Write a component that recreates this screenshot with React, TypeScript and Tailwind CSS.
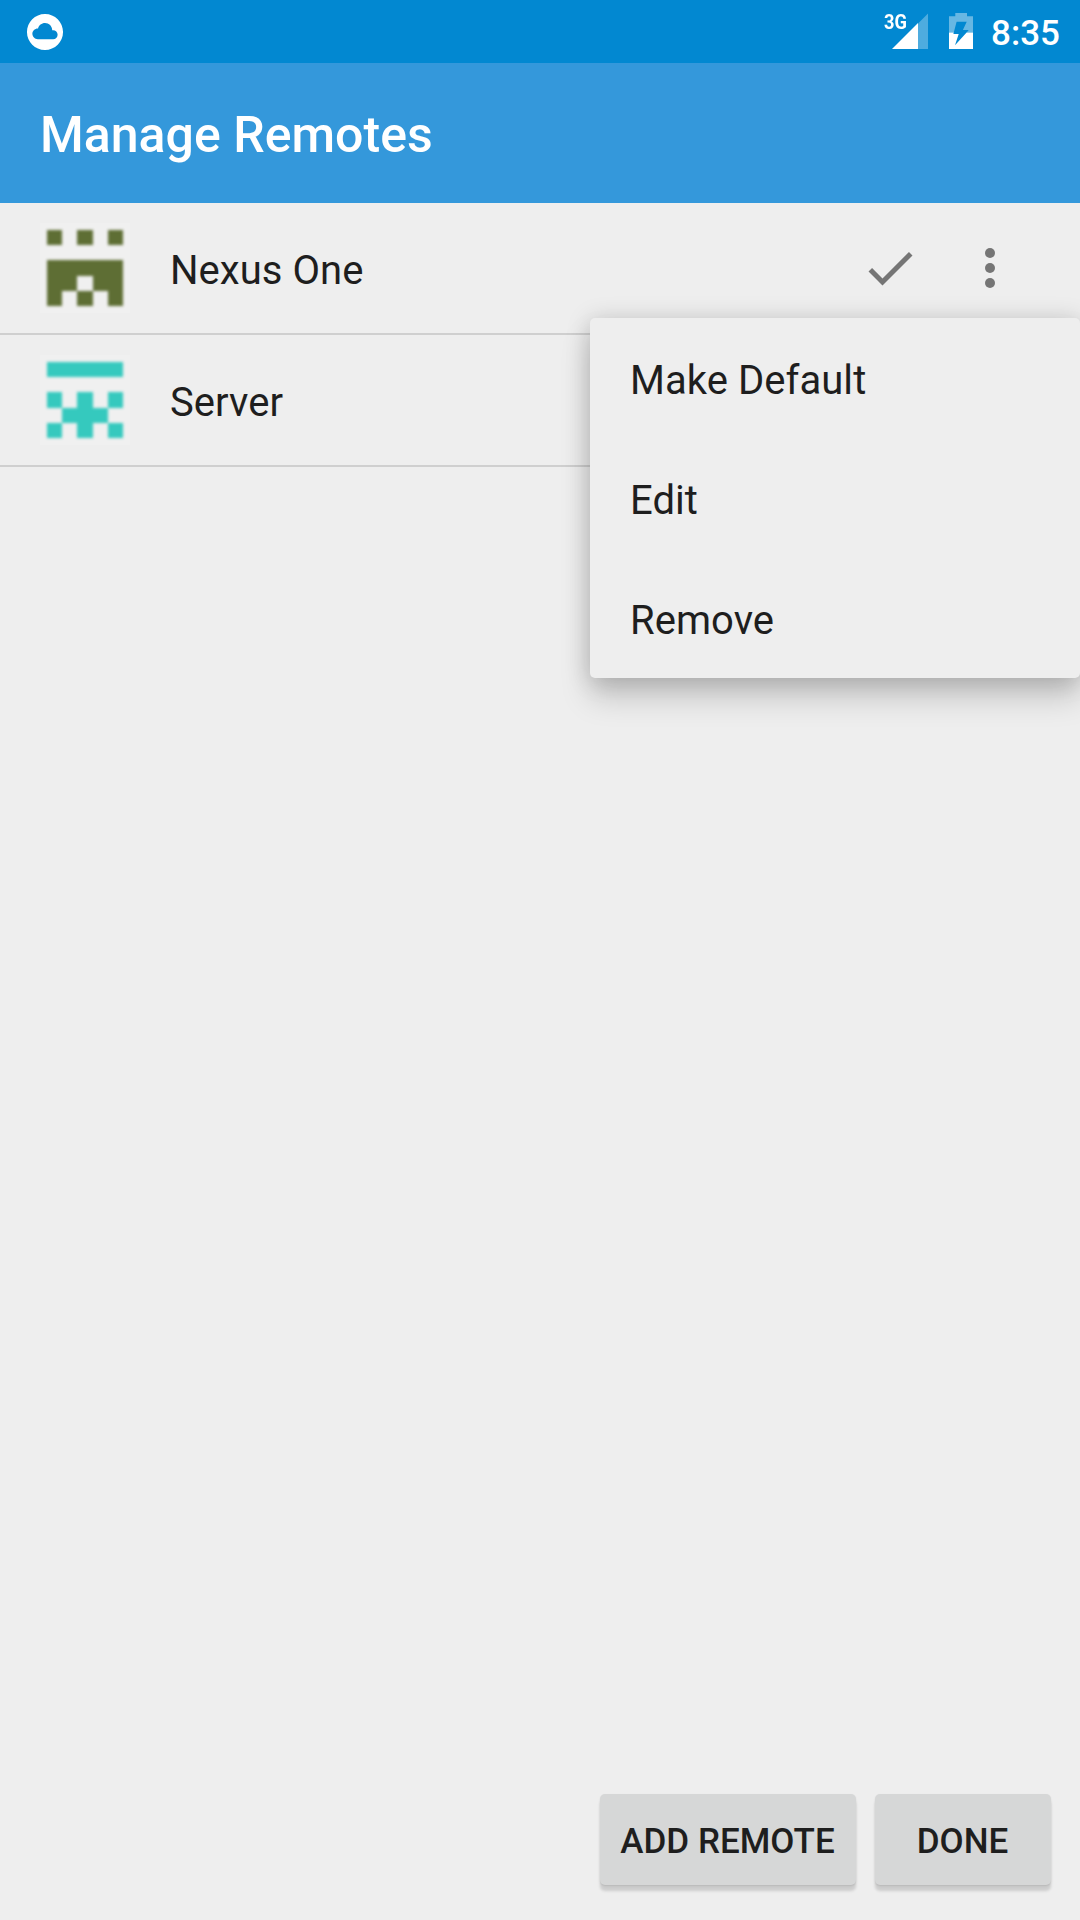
import React from "react";

const GREEN = ["10101", "00000", "11111", "11011", "10101"];
const TEAL = ["11111", "00000", "10101", "01110", "10101"];

function Identicon({ rows, color, id }: { rows: string[]; color: string; id: string }) {
  return (
    <svg width="90" height="90" viewBox="0 0 90 90" className="shrink-0 bg-[#f0f0f0]">
      <filter id={id} x="-10%" y="-10%" width="120%" height="120%" colorInterpolationFilters="sRGB">
        <feGaussianBlur stdDeviation="1.8" />
      </filter>
      <g fill={color} filter={`url(#${id})`} shapeRendering="crispEdges">
        {rows.flatMap((row, y) =>
          [...row].map((cell, x) =>
            cell === "1" ? (
              <rect key={`${x}-${y}`} x={7 + x * 15.2} y={7 + y * 15.2} width="15.2" height="15.2" />
            ) : null,
          ),
        )}
      </g>
    </svg>
  );
}

function CheckIcon() {
  return (
    <svg width="60" height="60" viewBox="0 0 24 24" fill="#757575">
      <path d="M9 16.17L4.83 12l-1.42 1.41L9 19 21 7l-1.41-1.41z" />
    </svg>
  );
}

function MoreIcon() {
  return (
    <svg width="60" height="60" viewBox="0 0 24 24" fill="#757575">
      <circle cx="12" cy="6" r="2" />
      <circle cx="12" cy="12" r="2" />
      <circle cx="12" cy="18" r="2" />
    </svg>
  );
}

function StatusBar() {
  return (
    <header className="flex h-[63px] items-center justify-between bg-[#0288d1] pl-[23.4px] pr-5 text-white">
      <svg width="44" height="44" viewBox="-0.2 -0.2 24.4 24.4" fill="white" className="mt-px">
        <path d="M12 2C6.48 2 2 6.48 2 12s4.48 10 10 10 10-4.48 10-10S17.52 2 12 2zm4.5 14H8c-1.66 0-3-1.34-3-3s1.34-3 3-3l.14.01C8.58 8.28 10.13 7 12 7c2.21 0 4 1.79 4 4h.5c1.38 0 2.5 1.12 2.5 2.5S17.88 16 16.5 16z" />
      </svg>
      <div className="flex h-full items-center">
        <div className="relative mr-[21px] h-full w-[44px]">
          <span className="absolute left-0 top-[10px] origin-left scale-x-[0.87] text-[21px] leading-[24px] font-bold">
            3G
          </span>
          <svg width="44" height="63" viewBox="884 0 44 63" fill="white">
            <path d="M918 23.5L928 13.5V49H918z" fillOpacity="0.3" />
            <path d="M892 49L918 23V49z" />
          </svg>
        </div>
        <svg width="24" height="63" viewBox="949 0 24 63" fill="white">
          <path d="M949 32.5V16.3H955.3V13H967V16.3H973V32.5H966.6L968.7 30H962.9L966.7 21.7H956.6L953.8 32.5z" fillOpacity="0.4" />
          <path d="M949 32.5H953.8L953.4 34H958.7L955 45.3L966.6 32.5H973V49H949z" />
        </svg>
        <span className="ml-[18px] pt-[3px] text-[35px] leading-[41px] font-medium">8:35</span>
      </div>
    </header>
  );
}

function RemoteRow({ name, rows, color, isDefault }: { name: string; rows: string[]; color: string; isDefault?: boolean }) {
  return (
    <li className="flex h-[132px] items-center border-b-2 border-[#cfcfcf] pl-10 pr-[60px]">
      <Identicon rows={rows} color={color} id={`soft-${name.split(" ")[0]}`} />
      <span className="ml-10 grow pt-1 text-[40px] leading-[47px] tracking-[0.05px]">{name}</span>
      {isDefault && <CheckIcon />}
      <span className="ml-10">
        <MoreIcon />
      </span>
    </li>
  );
}

const button =
  "h-[91px] rounded-[5px] bg-[#d6d7d7] pt-[3px] text-[35px] font-medium leading-none shadow-[0_6px_3px_rgba(0,0,0,0.14),0_1px_2px_rgba(0,0,0,0.1)]";

export default function App() {
  return (
    <div className="relative flex h-[1920px] w-[1080px] flex-col overflow-hidden bg-[#eeeeee] font-['Roboto',sans-serif] text-[#1e1e1e]">
      <StatusBar />
      <div className="flex h-[140px] items-center bg-[#3498db] px-10 pt-1">
        <h1 className="text-[50px] leading-[59px] font-medium tracking-[0.03px] text-white">Manage Remotes</h1>
      </div>
      <ul className="grow">
        <RemoteRow name="Nexus One" rows={GREEN} color="#5e6e34" isDefault />
        <RemoteRow name="Server" rows={TEAL} color="#35c9be" />
      </ul>
      <footer className="flex justify-end gap-[19px] pr-[29.5px] pb-[35px]">
        <button className={`${button} w-[256px]`}>ADD REMOTE</button>
        <button className={`${button} w-[176px]`}>DONE</button>
      </footer>
      <div className="absolute right-0 top-[318px] w-[490px] rounded-[5px] bg-[#eeeeee] text-[40px] tracking-[0.05px] shadow-[0_20px_30px_rgba(0,0,0,0.17),0_2px_24px_rgba(0,0,0,0.18)]">
        {["Make Default", "Edit", "Remove"].map((label) => (
          <div key={label} className="flex h-[120px] items-center px-10 pt-1.5">
            {label}
          </div>
        ))}
      </div>
    </div>
  );
}
